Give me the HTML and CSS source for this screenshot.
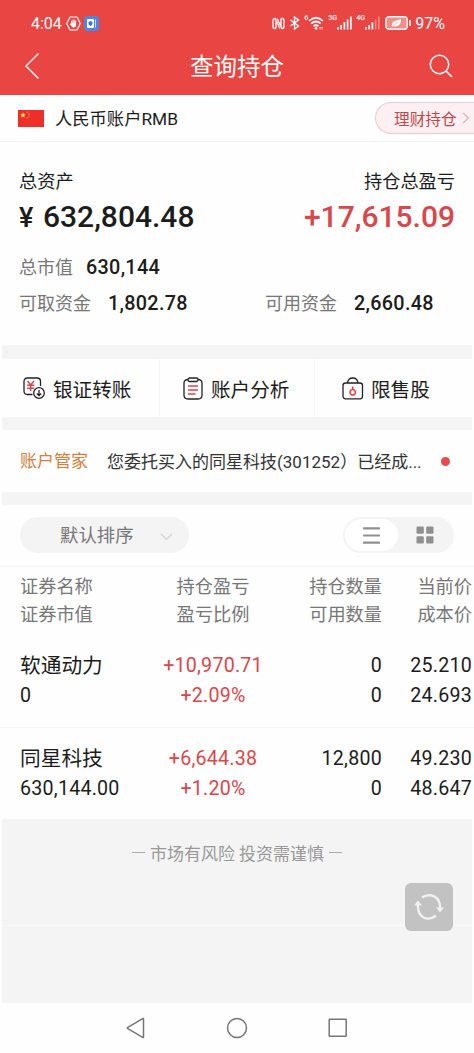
FILE: index.html
```
<!DOCTYPE html>
<html lang="zh-CN">
<head>
	<meta charset="utf-8">
	<title>查询持仓</title>
	<link rel="stylesheet" href="styles.css">
</head>
<body>
	<div class="header">
		<div class="status">
			<span class="time">4:04</span>
			<svg class="hand" width="15" height="15" viewBox="0 0 15 15"><path d="M4 1h7l3.300 6.500L11 14H4L.7 7.500z" fill="none" stroke="#fff" stroke-width="1.200"/><path d="M5.700 7V5M7 7V4M8.300 7V4M9.600 7V5" stroke="#fff" stroke-width="1" stroke-linecap="round"/><path d="M5.200 6.800h4.900V9q0 2.500-2.500 2.500-1.500 0-2.300-1.500L4 8.200z" fill="#fff"/></svg>
			<svg class="app" width="15" height="15" viewBox="0 0 15 15"><rect width="15" height="15" rx="3" fill="#4f86dc"/><rect x="3" y="3" width="7" height="9" rx="1" fill="#fff"/><path d="M11.500 3.500v8" stroke="#c9defa"/><path d="M6.500 5l2 1v1.500q0 1.500-2 2.500-2-1-2-2.500V6z" fill="#3e76cc"/></svg>
			<div class="signals">
				<svg width="13" height="13" viewBox="0 0 13 13"><path d="M3.700 11.500H2.500Q1 11.500 1 10V3.500Q1 1.500 3 1.500L8 11.500M5 1.500l5 10Q12 11.500 12 9.500V3Q12 1.500 10.500 1.500H9.300M4 4v7.500M9 1.500V9" fill="none" stroke="#fff" stroke-width="1.300"/></svg>
				<svg class="bt" width="11" height="14" viewBox="0 0 11 14"><path d="M1.500 4l8 6L5.500 13V1l4 3-8 6" fill="none" stroke="#fff" stroke-width="1.400"/></svg>
				<sup>6</sup>
				<svg class="wifi" width="16" height="14" viewBox="0 0 16 14"><path d="M1 5Q8-1.500 15 5M3.200 7.700Q8 3.300 12.800 7.700M5.500 10.200Q8 8 10.500 10.200" fill="none" stroke="#fff" stroke-width="1.700"/><circle cx="8" cy="12" r="1.500" fill="#fff"/><path d="M11 11.500h4M11 13h4" stroke="#fbb" stroke-width=".8"/></svg>
				<sup class="g">5G</sup>
				<svg width="15" height="14" viewBox="0 0 15 14"><path d="M1 11v2.500M4.200 9v4.500M7.400 6v7.500M10.600 3.500v10M13.800.5v13" stroke="#fff" stroke-width="1.700"/></svg>
				<sup class="g">4G</sup>
				<svg width="15" height="14" viewBox="0 0 15 14"><path d="M1 11v2.500M4.200 9v4.500M7.400 6v7.500" stroke="#fff" stroke-width="1.700"/><path d="M10.600 3.500v10M13.800.5v13" stroke="#f58c87" stroke-width="1.500"/></svg>
				<svg class="battery" width="27" height="14" viewBox="0 0 27 14"><rect x=".8" y=".8" width="21.400" height="12.400" rx="3" fill="#f28d88" stroke="#fff" stroke-width="1.400"/><path d="M25 4v6" stroke="#fff" stroke-width="1.600"/><path d="M7 11q-1-5 3.500-6.200L16 3q.3 7-5 7.300-2 .2-3 0z" fill="#fff"/><path d="M6.500 12L13 5.500" stroke="#f28d88" stroke-width=".7"/></svg>
				<span class="percent">97%</span>
			</div>
		</div>
		<div class="title">
			<svg width="16" height="28" viewBox="0 0 16 28"><path d="M14.500 1.500L2 14l12.500 12.500" fill="none" stroke="#fff" stroke-width="1.400"/></svg>
			<h1>查询持仓</h1>
			<svg width="24" height="24" viewBox="0 0 24 24"><circle cx="10.500" cy="10.500" r="9.200" fill="none" stroke="#fff" stroke-width="1.500"/><path d="M17 17l6 6" stroke="#fff" stroke-width="1.700"/></svg>
		</div>
	</div>

	<div class="account">
		<svg width="26" height="17" viewBox="0 0 26 17"><rect width="26" height="17" fill="#ec2f2b"/><path d="M5 2.300l.8 1.700 1.900.2-1.400 1.300.4 1.900L5 6.500l-1.700.9.4-1.900-1.400-1.300L4.200 4z" fill="#ffd94a"/><g fill="#f6a53a"><circle cx="9.500" cy="2.200" r=".7"/><circle cx="11" cy="4" r=".7"/><circle cx="11" cy="6.400" r=".7"/><circle cx="9.300" cy="8" r=".7"/></g></svg>
		<span class="name">人民币账户RMB</span>
		<div class="licai">理财持仓<svg width="8" height="12" viewBox="0 0 8 12"><path d="M1 1l5.500 5L1 11" fill="none" stroke="#dcb6ba" stroke-width="1.300"/></svg></div>
	</div>

	<div class="asset">
		<div class="line labels"><span>总资产</span><span>持仓总盈亏</span></div>
		<div class="line total"><span><i>¥</i>632,804.48</span><span class="red">+17,615.09</span></div>
		<div class="line funds market"><label>总市值</label><b>630,144</b></div>
		<div class="line funds">
			<div class="half"><label>可取资金</label><b>1,802.78</b></div>
			<div class="half"><label>可用资金</label><b>2,660.48</b></div>
		</div>
	</div>

	<div class="menu">
		<div class="item transfer">
			<svg width="23" height="23" viewBox="0 0 23 23" fill="none" stroke="#222" stroke-width="1.300"><path d="M9.500 17.500H4.500Q1 17.500 1 14V4.500Q1 1 4.500 1H14q3.500 0 3.500 3.500V9"/><path d="M4.500 4l3.200 4L11 4M4.200 8.300h7M4.200 11.200h7M7.700 8v6" stroke="#d8454b" stroke-width="1.400"/><circle cx="16" cy="16" r="5.300"/><path d="M16 13v5.500M13.800 16.500l2.200 2.200 2.200-2.200"/></svg>
			<span>银证转账</span>
		</div>
		<div class="item analyse">
			<svg width="20" height="23" viewBox="0 0 20 23" fill="none" stroke="#222" stroke-width="1.300"><path d="M5 2.500Q1 2.500 1 6v12q0 4 4 4h10q4 0 4-4V6q0-3.500-4-3.500"/><rect x="5" y="1" width="10" height="3.500" rx="1.700"/><path d="M5 9h10M5 13h10M5 17h7.500" stroke="#d8454b" stroke-width="1.500"/></svg>
			<span>账户分析</span>
		</div>
		<div class="item limit">
			<svg width="22" height="23" viewBox="0 0 22 23" fill="none" stroke="#222" stroke-width="1.300"><rect x="1" y="6" width="19.500" height="15.800" rx="2.500"/><path d="M5.500 6Q6 1 10.700 1T16 6"/><circle cx="10.700" cy="15.300" r="2.700" stroke="#e3393f" stroke-width="1.400"/><path d="M10.700 12.500V9.500" stroke="#e3393f" stroke-width="1.400"/></svg>
			<span>限售股</span>
		</div>
	</div>

	<div class="notice">
		<span class="keeper">账户管家</span>
		<span class="msg">您委托买入的同星科技<em>(301252</em>）已经成...</span>
		<i class="dot"></i>
	</div>

	<div class="tools">
		<div class="sort"><span>默认排序</span><svg width="13" height="8" viewBox="0 0 13 8"><path d="M1 1l5.500 5.500L12 1" fill="none" stroke="#d2d2d2" stroke-width="1.200"/></svg></div>
		<div class="switch">
			<div class="on"><svg width="17" height="17" viewBox="0 0 17 17"><path d="M1 1.300h15M1 8.500h15M1 15.700h15" stroke="#8f8f8f" stroke-width="2.200" stroke-linecap="round"/></svg></div>
			<div class="off"><svg width="18" height="18" viewBox="0 0 18 18" fill="#8f8f8f"><rect x=".5" y=".5" width="7.300" height="7.300" rx="1.200"/><rect x="10.200" y=".5" width="7.300" height="7.300" rx="1.200"/><rect x=".5" y="10.200" width="7.300" height="7.300" rx="1.200"/><rect x="10.200" y="10.200" width="7.300" height="7.300" rx="1.200"/></svg></div>
		</div>
	</div>

	<div class="row head">
		<div><p>证券名称</p><p>证券市值</p></div>
		<div><p>持仓盈亏</p><p>盈亏比例</p></div>
		<div><p>持仓数量</p><p>可用数量</p></div>
		<div><p>当前价</p><p>成本价</p></div>
	</div>
	<div class="row">
		<div><p class="stock">软通动力</p><p>0</p></div>
		<div class="red"><p>+10,970.71</p><p>+2.09%</p></div>
		<div><p>0</p><p>0</p></div>
		<div><p>25.210</p><p>24.693</p></div>
	</div>
	<div class="row last">
		<div><p class="stock">同星科技</p><p>630,144.00</p></div>
		<div class="red"><p>+6,644.38</p><p>+1.20%</p></div>
		<div><p>12,800</p><p>0</p></div>
		<div><p>49.230</p><p>48.647</p></div>
	</div>

	<div class="bottom">
		<div class="main">
			<p class="tip"><i></i>市场有风险 投资需谨慎<i></i></p>
			<div class="refresh">
				<svg width="30" height="28" viewBox="0 0 30 28" fill="none" stroke="#f1f1f1" stroke-width="2.400"><path d="M8 4.500Q14 .5 20.500 3.500 26.500 7 26 15"/><path d="M22 22.500Q16 27.500 9.500 24.500 3.500 21 4 12"/><path d="M22 14.500h8l-4 5zM0 12.500h8l-4-5z" fill="#f1f1f1" stroke="none"/></svg>
			</div>
		</div>
	</div>

	<div class="nav">
		<svg width="19" height="22" viewBox="0 0 19 22"><path d="M17.500 2v18q0 .8-.8.400L1.800 11.700q-1-.7 0-1.400L16.700 1.600q.8-.4.800.4z" fill="none" stroke="#767676" stroke-width="1.500"/></svg>
		<svg width="22" height="22" viewBox="0 0 22 22"><circle cx="11" cy="11" r="9.500" fill="none" stroke="#767676" stroke-width="1.500"/></svg>
		<svg width="20" height="20" viewBox="0 0 20 20"><rect x="1.200" y="1.200" width="17" height="17" rx=".5" fill="none" stroke="#767676" stroke-width="1.500"/></svg>
	</div>
</body>
</html>
```
FILE: styles.css
```
*{
	margin: 0;
	padding: 0;
	box-sizing: border-box;
}
body{
	width: 474px;
	height: 1053px;
	overflow: hidden;
	background: #fefefe;
	color: #1c1c1c;
	font-family: Roboto, "Noto Sans CJK SC", sans-serif;
	font-size: 18px;
}
svg{
	display: block;
	flex: none;
}
i, em{
	font-style: normal;
}
.red{
	color: #d8474b;
}

/* 顶部 */
.header{
	height: 95px;
	background: #e84543;
	color: #fff;
}
.status{
	display: flex;
	align-items: center;
	height: 46px;
	padding: 0 29px 0 31px;
}
.time{
	width: 35px;
	font-size: 16px;
	white-space: nowrap;
}
.app{
	margin-left: 3px;
}
.signals{
	display: flex;
	align-items: center;
	margin-left: auto;
}
.bt{
	margin-left: 4px;
}
sup{
	margin-left: 4px;
	font-size: 7px;
	line-height: 8px;
	align-self: flex-start;
	font-weight: 500;
}
.g{
	width: 9px;
}
.battery{
	margin-left: 5px;
}
.percent{
	margin-left: 3px;
	font-size: 16px;
}
.title{
	display: flex;
	align-items: center;
	justify-content: space-between;
	height: 40px;
	padding: 0 21px 0 24px;
}
.title h1{
	margin: -2px 0 0 5px;
	font-size: 23.5px;
	font-weight: 400;
}

/* 账户 */
.account{
	display: flex;
	align-items: center;
	height: 47px;
	padding-left: 18px;
	border-bottom: 1px solid #f4f4f4;
}
.account .name{
	margin: -2px 0 0 11px;
	font-size: 17.3px;
}
.licai{
	display: flex;
	align-items: center;
	justify-content: space-between;
	width: 99px;
	height: 32px;
	margin-left: auto;
	padding: 0 4px 0 18px;
	border: 1px solid #e6cdd2;
	border-right: 0;
	border-radius: 16px 0 0 16px;
	background: #fdf0f2;
	color: #c4474b;
	font-size: 15.7px;
}

/* 资产 */
.asset{
	height: 203px;
	padding: 22px 19px 0;
}
.line{
	display: flex;
	align-items: center;
	justify-content: space-between;
}
.labels{
	height: 31px;
	font-size: 18.2px;
}
.total{
	height: 42px;
	font-size: 30px;
	font-weight: 500;
}
.total i{
	display: inline-block;
	width: 24px;
	font-size: 27px;
}
.funds{
	height: 36px;
	justify-content: flex-start;
}
.market{
	margin-top: 12px;
}
.funds label{
	margin: -2px 13px 0 0;
	color: #777;
}
.half label{
	margin-right: 17px;
}
.funds b{
	font-size: 19.8px;
	font-weight: 500;
	letter-spacing: .3px;
}
.half{
	display: flex;
	align-items: center;
	flex: none;
}
.half:first-child{
	width: 246px;
}

/* 菜单 */
.menu{
	display: flex;
	height: 85px;
	margin: 0 2px;
	border-top: 14px solid #f4f4f4;
	border-bottom: 13px solid #f4f4f4;
}
.item{
	display: flex;
	align-items: center;
	width: 158px;
	padding-left: 21px;
	font-size: 19.6px;
	border-right: 1px solid #f6f6f6;
}
.item span{
	margin-left: 8px;
	white-space: nowrap;
}
.transfer span{
	margin-left: 7px;
}
.analyse{
	width: 155px;
	padding-left: 23px;
}
.limit{
	width: 157px;
	border: 0;
	padding-left: 27px;
}
.limit span{
	margin-left: 7px;
}

/* 通知 */
.notice{
	display: flex;
	align-items: center;
	height: 75px;
	margin: 0 2px;
	padding-left: 18px;
	border-bottom: 13px solid #f4f4f4;
}
.keeper{
	width: 87px;
	margin-top: -3px;
	color: #d5803f;
	font-size: 17px;
}
.msg{
	width: 320px;
	margin-top: -1px;
	color: #333;
	font-size: 17px;
	white-space: nowrap;
}
.dot{
	width: 9px;
	height: 9px;
	margin-left: 14px;
	border-radius: 50%;
	background: #e84a4f;
}

/* 排序 */
.tools{
	display: flex;
	justify-content: space-between;
	height: 62px;
	padding: 12px 20px 0;
	border-bottom: 1px solid #f4f4f4;
}
.sort{
	display: flex;
	align-items: center;
	width: 169px;
	height: 36px;
	padding-left: 40px;
	border-radius: 18px;
	background: #f4f4f4;
	color: #777;
	font-size: 18.4px;
}
.sort span{
	margin-top: -3px;
}
.sort svg{
	margin: 3px 0 0 26px;
}
.switch{
	display: flex;
	width: 111px;
	height: 36px;
	padding: 2px;
	border-radius: 18px;
	background: #f4f4f4;
}
.on, .off{
	display: flex;
	align-items: center;
	justify-content: center;
	width: 53px;
	border-radius: 16px;
}
.on{
	background: #fff;
}

/* 持仓列表 */
.row{
	display: grid;
	grid-template-columns: 123px 140px 99px 90px;
	height: 92px;
	padding: 15px 0 0 20px;
	border-bottom: 1px solid #f4f4f4;
	font-size: 19.6px;
	line-height: 30px;
	letter-spacing: .25px;
}
.row div{
	text-align: right;
}
.row div:first-child{
	text-align: left;
}
.row div:nth-child(2){
	text-align: center;
}
.row .stock{
	font-size: 20.7px;
	letter-spacing: 0;
}
.head{
	height: 69px;
	padding-top: 6px;
	border: 0;
	color: #777;
	font-size: 18.2px;
	line-height: 28px;
	letter-spacing: 0;
}
.last{
	height: 91px;
	padding-top: 16px;
	border: 0;
}

/* 底部 */
.bottom{
	height: 184px;
	margin: 0 2px;
	background: #f4f4f4;
}
.main{
	height: 107px;
	padding-top: 19px;
	border-bottom: 1px solid #f9f9f9;
}
.tip{
	display: flex;
	align-items: center;
	justify-content: center;
	height: 28px;
	color: #999;
	font-size: 17px;
}
.tip i{
	width: 13px;
	height: 1px;
	margin: 0 5px;
	background: #aaa;
}
.refresh{
	display: flex;
	align-items: center;
	justify-content: center;
	width: 48px;
	height: 48px;
	margin: 17px 19px 0 auto;
	border-radius: 6px;
	background: #c2c2c2;
}
.nav{
	display: flex;
	align-items: center;
	justify-content: space-between;
	height: 50px;
	padding: 0 126px;
}
```
